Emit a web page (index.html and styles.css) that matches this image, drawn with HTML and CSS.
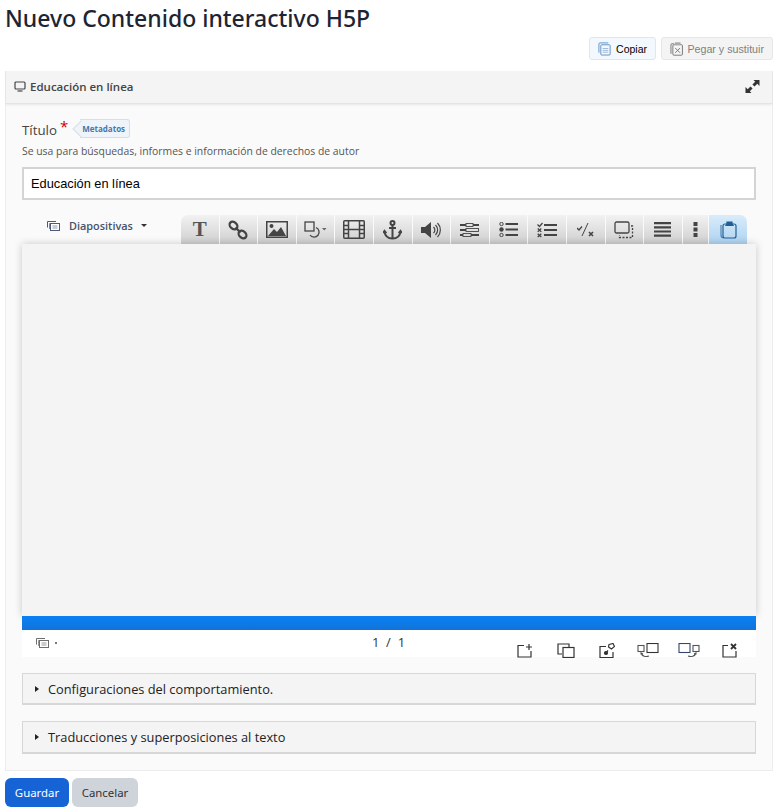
FILE: index.html
```html
<!DOCTYPE html>
<html lang="es">
<head>
<meta charset="utf-8">
<title>Nuevo Contenido interactivo H5P</title>
<link rel="stylesheet" href="styles.css">
</head>
<body>
<h1 class="page-title">Nuevo Contenido interactivo H5P</h1>
<div class="clipboard-row">
  <button class="clip-btn copy"><svg width="14" height="15" viewBox="0 0 14 15" fill="none" stroke="#5b8fc4"><path d="M1 12V2.500Q1 1.500 2 1.500H11"/><rect x="3" y="3.500" width="10" height="11" rx="1"/><path d="M5 7.500h6M5 9.500h6M5 11.500h6" stroke="#9bb8d6"/></svg>Copiar</button>
  <button class="clip-btn paste"><svg width="14" height="15" viewBox="0 0 14 15" fill="none" stroke="#777"><path d="M1 13V3.500Q1 2.500 2 2.500H4"/><rect x="3" y="3.500" width="10" height="11" rx="1"/><rect x="5" y="1" width="6" height="3" fill="#aaa" stroke="none"/><path d="M5.500 7l5 5M10.500 7l-5 5"/></svg>Pegar y sustituir</button>
</div>
<section class="panel">
  <header class="panel-head">
    <div class="panel-name"><svg width="12" height="11" viewBox="0 0 12 11" fill="none" stroke="#444" stroke-width="1.200"><rect x="1" y="1" width="10" height="7" rx="1"/><path d="M3.500 10h5"/></svg>Educación en línea</div>
    <svg width="15" height="15" viewBox="0 0 15 15" fill="#333"><path d="M8.500 1H14.500V7L12.300 4.800 9.500 7.600 7.400 5.500 10.200 2.700Z"/><path d="M6.500 14H.5V8L2.700 10.200 5.500 7.400 7.600 9.500 4.800 12.300Z"/></svg>
  </header>
  <div class="panel-body">
    <div class="label-row"><span class="label">Título</span><span class="req">*</span><span class="meta-tag">Metadatos</span></div>
    <p class="hint">Se usa para búsquedas, informes e información de derechos de autor</p>
    <div class="title-input">Educación en línea</div>

    <div class="editor-top">
      <div class="slides-select"><svg width="13" height="11" viewBox="0 0 13 11" fill="none" stroke="#4a5a78"><path d="M.5 7.500V1.500H9"/><path d="M2.500 9V3.500H11" opacity=".7"/><rect x="3.500" y="3.500" width="9" height="7" fill="#fff"/><path d="M5.500 6h5M5.500 8h5" stroke="#8c98ae"/></svg><span>Diapositivas</span><i class="caret"></i></div>
      <div class="toolbar">
        <div class="tool first"><span class="t-glyph">T</span></div>
        <div class="tool"><svg width="20" height="20" viewBox="0 0 20 20" fill="none" stroke="#444" stroke-width="2.300"><ellipse cx="5.500" cy="5.500" rx="4.300" ry="3.300" transform="rotate(42 5.500 5.500)"/><ellipse cx="14.500" cy="14.500" rx="4.300" ry="3.300" transform="rotate(42 14.500 14.500)"/><path d="M7.500 7.500l5 5"/></svg></div>
        <div class="tool"><svg width="22" height="17" viewBox="0 0 22 17"><rect x=".75" y=".75" width="20.500" height="15.500" fill="none" stroke="#444" stroke-width="1.500"/><path d="M2 15l6-7 3 3 4-5 5 9Z" fill="#444"/><circle cx="5.500" cy="5" r="2" fill="#444"/></svg></div>
        <div class="tool"><svg width="23" height="17" viewBox="0 0 23 17" fill="none" stroke="#444" stroke-width="1.300"><rect x="1" y="1" width="9" height="9"/><path d="M12 6.500a5 5 0 1 1-6 7.500"/><path d="M18 7h4.500l-2.250 2.500Z" fill="#666" stroke="none"/></svg></div>
        <div class="tool"><svg width="22" height="19" viewBox="0 0 22 19" fill="none" stroke="#444" stroke-width="1.500"><rect x=".75" y=".75" width="20.500" height="17.500" rx="1"/><path d="M5.500 1v17M16.500 1v17M5.500 9.500h11M1 5.500h4.500M1 9.500h4.500M1 13.500h4.500M16.500 5.500H21M16.500 9.500H21M16.500 13.500H21"/></svg></div>
        <div class="tool"><svg width="19" height="20" viewBox="0 0 19 20" fill="none" stroke="#444" stroke-width="2"><circle cx="9.500" cy="3" r="2"/><path d="M9.500 5v14M6 8h7"/><path d="M1.500 11.500C2 16 5 18.500 9.500 18.500S17 16 17.500 11.500"/><path d="M0 13l1.500-2.500L3.500 13M15.500 13l2-2.500L19 13" stroke-width="1.500"/></svg></div>
        <div class="tool"><svg width="20" height="16" viewBox="0 0 20 16" fill="#444"><path d="M0 5h4l6-5v16l-6-5H0Z"/><path d="M12.500 5a4 4 0 0 1 0 6M14.500 3a7 7 0 0 1 0 10M16.500 1a10 10 0 0 1 0 14" fill="none" stroke="#444" stroke-width="1.200"/></svg></div>
        <div class="tool"><svg width="19" height="14" viewBox="0 0 19 14"><g fill="#444"><path d="M0 1h6v2H0zM13 1h6v2h-6zM0 6h6v2H0zM0 11h3v2H0zM11 11h8v2h-8z"/></g><g fill="none" stroke="#444" stroke-width=".9"><rect x="6" y=".5" width="7" height="3"/><rect x="6" y="5.500" width="12.500" height="3"/><rect x="3" y="10.500" width="8" height="3"/></g></svg></div>
        <div class="tool"><svg width="19" height="15" viewBox="0 0 19 15" fill="#444"><circle cx="2.500" cy="2" r="1.700" fill="none" stroke="#444"/><circle cx="2.500" cy="7.500" r="2.200"/><circle cx="2.500" cy="13" r="1.700" fill="none" stroke="#444"/><path d="M6.500 1h12.500v2H6.500zM6.500 6.500h12.500v2H6.500zM6.500 12h12.500v2H6.500z"/></svg></div>
        <div class="tool"><svg width="20" height="16" viewBox="0 0 20 16" fill="none" stroke="#444" stroke-width="1.300"><path d="M.5 2.500l2 2 3-3.500M.7 6.500l3.600 3.200M4.300 6.500L.7 9.700M.7 11.700l3.600 3.300M4.300 11.700L.7 15"/><path d="M7 3h13M7 8h13M7 13h13" stroke-width="2"/></svg></div>
        <div class="tool"><svg width="17" height="14" viewBox="0 0 17 14" fill="none" stroke="#444" stroke-width="1.300"><path d="M0 5l2 2 3-3.500"/><path d="M11 0L5 13" stroke-width="1"/><path d="M12 9l4 4M16 9l-4 4" stroke-width="1.600"/></svg></div>
        <div class="tool"><svg width="20" height="18" viewBox="0 0 20 18" fill="none" stroke="#444" stroke-width="1.300"><rect x="1" y="1" width="14" height="11" rx="1.500"/><path d="M17 5h1.500v11.500H5.500V14" stroke-dasharray="2 1.500"/></svg></div>
        <div class="tool"><svg width="17" height="15" viewBox="0 0 17 15" fill="#444"><path d="M0 0h17v2.200H0zM0 4.200h17v2.200H0zM0 8.400h17v2.200H0zM0 12.600h17v2.200H0z"/></svg></div>
        <div class="tool narrow"><svg width="5" height="15" viewBox="0 0 5 15" fill="#444"><path d="M.5 0h4v4h-4zM.5 5.500h4v4h-4zM.5 11h4v4h-4z"/></svg></div>
        <div class="tool last"><svg width="17" height="18" viewBox="0 0 17 18" fill="none" stroke="#1f5f96" stroke-width="1.200"><path d="M1 4v10Q1 17 4 17" opacity=".7"/><rect x="3" y="3" width="13" height="14" rx="2"/><path d="M7 3V1h5v2l1 1.500H6Z" fill="#1f5f96"/></svg></div>
      </div>
    </div>

    <div class="canvas"></div>
    <div class="progress"></div>
    <div class="slide-foot">
      <div class="foot-left"><svg width="13" height="11" viewBox="0 0 13 11" fill="none" stroke="#6e6e6e"><path d="M.5 7.500V1.500H9"/><path d="M2.500 9V3.500H11" opacity=".7"/><rect x="3.500" y="3.500" width="9" height="7" fill="#fff"/><path d="M5.500 6h5M5.500 8h5" stroke="#999"/></svg><i class="dot"></i></div>
      <div class="pager">1&nbsp; / &nbsp;1</div>
      <div class="foot-tools">
        <svg width="16" height="15" viewBox="0 0 16 15" fill="none" stroke="#333" stroke-width="1.200"><path d="M7 2.500H1v11.500h13V8"/><path d="M12 1v6M9 4h6"/></svg>
        <svg width="18" height="15" viewBox="0 0 18 15" fill="none" stroke="#333" stroke-width="1.200"><path d="M5 11H1V1h11v3"/><rect x="6" y="4.500" width="11" height="10"/></svg>
        <svg width="16" height="15" viewBox="0 0 16 15" fill="none" stroke="#333" stroke-width="1.200"><path d="M7 3.500H1v11h13V9"/><path d="M10 1.500l4-1 1.500 3-3 2.500-3-2zM6 10.500l3-3"/><circle cx="7" cy="10" r="1.500" fill="#333"/></svg>
        <svg width="22" height="15" viewBox="0 0 22 15" fill="none" stroke="#555" stroke-width="1.100"><rect x="10" y=".5" width="11" height="9" stroke="#333"/><rect x="1" y="2.500" width="6" height="6"/><path d="M4 10c1 3.500 5 4 8 3M4 11.500L4 10l2 1"/></svg>
        <svg width="22" height="15" viewBox="0 0 22 15" fill="none" stroke="#555" stroke-width="1.100"><rect x="1" y=".5" width="11" height="9" stroke="#33466b"/><rect x="15" y="2.500" width="6" height="6"/><path d="M18 10c-1 3.500-5 4-8 3M18 11.500V10l-2 1"/></svg>
        <svg width="16" height="15" viewBox="0 0 16 15" fill="none" stroke="#333" stroke-width="1.200"><path d="M6 2.500H1v11.500h13V8"/><path d="M9 1l5 5M14 1L9 6" stroke-width="1.800"/></svg>
      </div>
    </div>

    <div class="accordion short"><i class="arrow"></i>Configuraciones del comportamiento.</div>
    <div class="accordion"><i class="arrow"></i>Traducciones y superposiciones al texto</div>
  </div>
</section>
<div class="actions">
  <button class="btn primary">Guardar</button>
  <button class="btn secondary">Cancelar</button>
</div>
</body>
</html>
```
FILE: styles.css
```css
* { box-sizing: border-box; }
html, body { margin: 0; }
body {
  width: 781px;
  height: 812px;
  overflow: hidden;
  padding: 0 8px 0 5px;
  background: #fff;
  font-family: "Open Sans", "Noto Sans", sans-serif;
  color: #1d2125;
}
.page-title {
  margin: 0;
  height: 37px;
  font-family: "Noto Sans", sans-serif;
  font-size: 23px;
  font-weight: 500;
  line-height: 36px;
  color: #1d2433;
}
.clipboard-row {
  display: flex;
  justify-content: flex-end;
  gap: 5px;
  height: 23px;
  margin-bottom: 11px;
}
.clip-btn {
  display: flex;
  align-items: center;
  gap: 5px;
  padding: 0 8px;
  border-radius: 3px;
  font-family: "Liberation Sans", Arial, sans-serif;
  font-size: 10.500px;
  white-space: nowrap;
}
.clip-btn.copy { width: 67px; background: #f2f8fe; border: 1px solid #dbe7f1; color: #000; }
.clip-btn.paste { width: 112px; background: #f4f4f4; border: 1px solid #e6e6e6; color: #808080; font-size: 10.700px; gap: 4px; }
.panel {
  height: 700px;
  border: 1px solid #ececec;
  border-top: 0;
  background: #fafafa;
}
.panel-head {
  height: 33px;
  padding: 0 12px 2px 8px;
  background: #f4f4f4;
  border-bottom: 1px solid #e4e4e4;
  box-shadow: 0 1px 2px rgba(0, 0, 0, .08);
  display: flex;
  align-items: center;
  justify-content: space-between;
}
.panel-name {
  display: flex;
  align-items: center;
  gap: 4px;
  font-size: 11.500px;
  font-weight: 600;
  color: #444;
}
.panel-body { padding: 15px 16px 0; }
.label-row { display: flex; align-items: center; height: 22px; }
.label { font-size: 13.300px; color: #444; }
.req { color: #c00; font-size: 15px; line-height: 14px; margin: -8px 0 0 3px; }
.meta-tag {
  position: relative;
  z-index: 0;
  height: 19px;
  margin: -3px 0 0 12px;
  padding: 0 4px 0 2px;
  background: #eef4fa;
  border: 1px solid #d5dfe9;
  border-left: 0;
  border-radius: 0 3px 3px 0;
  font-size: 8px;
  font-weight: 700;
  line-height: 17px;
  color: #4878ab;
}
.meta-tag::before {
  content: "";
  position: absolute;
  z-index: -1;
  left: -5.500px;
  top: 2.500px;
  width: 11px;
  height: 11px;
  background: #eef4fa;
  border-left: 1px solid #d5dfe9;
  border-bottom: 1px solid #d5dfe9;
  transform: rotate(45deg);
}
.hint {
  margin: 4px 0 0;
  height: 12px;
  font-size: 10.400px;
  line-height: 12px;
  color: #555;
}
.title-input {
  margin-top: 10px;
  height: 33px;
  background: #fff;
  border: 2px solid #d4d4d4;
  padding: 0 7px;
  font-family: "Liberation Sans", Arial, sans-serif;
  font-size: 12.800px;
  line-height: 29px;
  color: #000;
}
.editor-top { display: flex; margin-top: 15px; height: 29px; }
.slides-select {
  width: 159px;
  padding: 0 0 8px 25px;
  display: flex;
  align-items: center;
  font-size: 10.900px;
  font-weight: 600;
  color: #47536b;
}
.slides-select span { margin-left: 9px; }
.caret {
  margin-left: 8px;
  border: 3px solid transparent;
  border-top: 3px solid #333;
  border-bottom: 0;
  width: 0;
}
.toolbar { display: flex; height: 29px; }
.tool {
  width: 38.600px;
  display: flex;
  align-items: center;
  justify-content: center;
  background: linear-gradient(#f2f2f2, #cfcfcf);
  border-right: 1px solid #fafafa;
}
.tool.narrow { width: 26px; }
.tool.first { border-top-left-radius: 7px; }
.tool.last {
  border-right: 0;
  border-top-right-radius: 7px;
  background: linear-gradient(#d9ecfb, #aed3f1);
}
.t-glyph { font-family: "Liberation Serif", serif; font-size: 21px; font-weight: 700; color: #555; line-height: 1; }
.canvas {
  position: relative;
  height: 372px;
  background: #f4f4f4;
  box-shadow: 0 0 8px rgba(0, 0, 0, .2);
}
.progress { position: relative; height: 14px; background: linear-gradient(#0a80f5, #1273d8); }
.slide-foot {
  position: relative;
  height: 27px;
  background: #fff;
  display: flex;
}
.foot-left { width: 60px; margin-left: 14px; padding-top: 7px; display: flex; align-items: flex-start; gap: 6px; }
.dot { width: 2px; height: 2px; background: #777; margin-top: 5px; }
.pager { width: 95px; margin-left: 245px; text-align: center; font-size: 13px; line-height: 25px; color: #333; }
.foot-tools {
  margin-left: auto;
  margin-right: 6px;
  padding-top: 13px;
  display: grid;
  grid-template-columns: repeat(6, 41px);
  justify-items: center;
  align-items: start;
}
.accordion {
  height: 33px;
  margin-top: 16px;
  background: #f4f4f4;
  border: 2px solid #d7d7d7;
  border-width: 1px 1px 2px;
  display: flex;
  align-items: center;
  padding-left: 12px;
  font-size: 12.800px;
  color: #222;
}
.accordion.short { height: 32px; }
.arrow {
  width: 0;
  border: 3px solid transparent;
  border-left: 4px solid #222;
  border-right: 0;
  margin-right: 9px;
}
.actions { display: flex; gap: 3px; margin-top: 7px; }
.btn {
  height: 29px;
  border: 0;
  border-radius: 6px;
  font-family: "Noto Sans", sans-serif;
  font-size: 11.400px;
}
.btn.primary { width: 64px; background: #1663d6; color: #fff; }
.btn.secondary { width: 66px; background: #ced4da; color: #333; }
```
